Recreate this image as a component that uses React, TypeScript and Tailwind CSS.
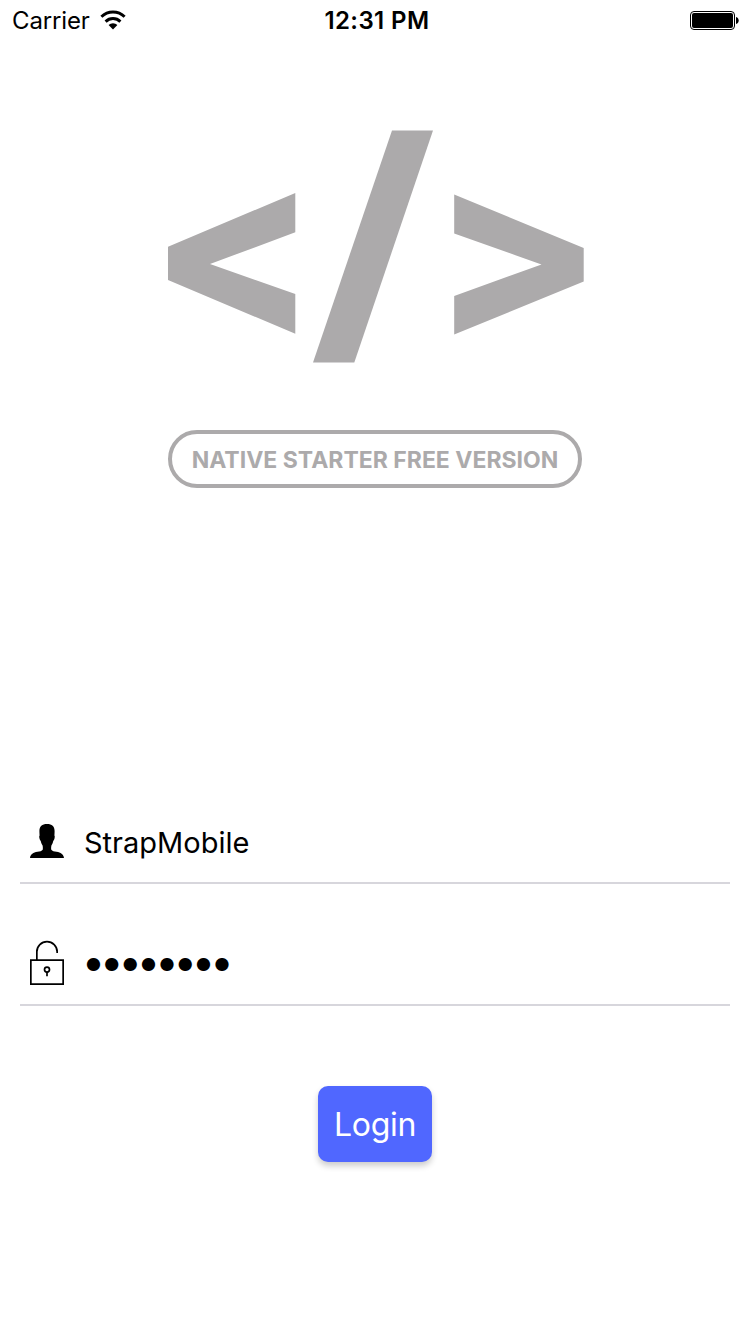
import type { ReactNode } from 'react';

function StatusBar() {
  return (
    <header className="grid h-10 grid-cols-3 items-center pl-3 pr-[11px] text-black">
      <div className="flex items-center gap-[10px]">
        <span className="pt-[2px] text-[24px] leading-[38px] tracking-[-0.15px]">Carrier</span>
        <svg width="26" height="20" viewBox="0 0 26 20" fill="none" stroke="#000" strokeWidth="2.9">
          <path d="M1.400 6.800a16.400 16.400 0 0 1 23.200 0" />
          <path d="M5.600 11.600a10.500 10.500 0 0 1 14.800 0" />
          <path d="M13 19.400l-4.400-4.400a6.200 6.200 0 0 1 8.800 0z" fill="#000" stroke="none" />
        </svg>
      </div>
      <span className="pl-[3px] pt-[2px] text-center text-[24px] font-semibold leading-[38px] tracking-[0.4px]">12:31 PM</span>
      <div className="flex items-center justify-end pt-px">
        <svg width="49" height="20" viewBox="0 0 49 20">
          <rect x="0.5" y="0.5" width="44" height="18" rx="3.5" fill="none" stroke="#000" />
          <rect x="2" y="2" width="41" height="15" rx="2" />
          <path d="M46 5.900c3.600.8 3.600 6.400 0 7.200z" />
        </svg>
      </div>
    </header>
  );
}

function Logo() {
  return (
    <div className="flex flex-col items-center pt-[90px]">
      <svg width="418" height="233" viewBox="166 130 418 233" fill="#acaaab">
        <path d="M168 246.7 295.3 193v39.3L210 264l85.3 30v39.8L168 280z" />
        <path d="M392 130.5h41L354.300 362.500H313z" />
        <path d="M454.200 194.500 583.700 248v33.500L454.200 334.500V296L541.500 264.500 454.200 233.500z" />
      </svg>
      <div className="mt-[67px] flex h-[58px] w-[414px] items-center justify-center rounded-full border-4 border-[#acaaab] pt-[2px]">
        <span className="whitespace-nowrap text-[23px] font-bold leading-none text-[#acaaab]">
          NATIVE STARTER FREE VERSION
        </span>
      </div>
    </div>
  );
}

function PersonIcon() {
  return (
    <svg className="mb-[2px]" width="34" height="34" viewBox="0 0 34 34">
      <path d="M17 0c5 0 7.600 2.400 7.600 7 0 1.600-.1 3.200-.2 4.600.5.400.4 1.600.1 2.900-.3 1.300-.7 2-1.200 2.300-.4 2-1.100 3.500-1.900 4.700-.3 1.800-.4 3.100-.1 4.200.9 1.300 2.900 1.700 5.200 2.100 4.300.8 6.900 2.300 7.500 6.200H0c.6-3.900 3.200-5.400 7.500-6.200 2.300-.4 4.300-.8 5.200-2.100.3-1.100.2-2.400-.1-4.200-.8-1.200-1.500-2.700-1.900-4.700-.5-.3-.9-1-1.200-2.300-.3-1.300-.4-2.500.1-2.900-.1-1.400-.2-3-.2-4.600C9.400 2.400 12 0 17 0z" />
    </svg>
  );
}

function UnlockIcon() {
  return (
    <svg className="mb-[2px]" width="34" height="46" viewBox="0 0 34 46" fill="none" stroke="#000" strokeWidth="1.700">
      <path d="M.85 20.150h32.300v24H.85z" />
      <path d="M6.850 20v-8.200a10.150 10.150 0 0 1 20.300 0v1.200" />
      <circle cx="17" cy="29.600" r="2.500" />
      <path d="M17 32v4.300" />
    </svg>
  );
}

function Field({ icon, children, className }: { icon: ReactNode; children: ReactNode; className: string }) {
  return (
    <div className={`flex items-center border-b-2 border-[#d7d6dc] pl-[10px] ${className}`}>
      {icon}
      {children}
    </div>
  );
}

export default function App() {
  return (
    <main className="flex h-[1334px] w-[750px] flex-col bg-white font-['Inter',sans-serif] text-black">
      <StatusBar />
      <Logo />
      <form className="mt-[314px] flex flex-col px-5" onSubmit={(event) => event.preventDefault()}>
        <Field icon={<PersonIcon />} className="h-[82px]">
          <span className="ml-5 pt-[2px] text-[29px] leading-[40px]">StrapMobile</span>
        </Field>
        <Field icon={<UnlockIcon />} className="mt-10 h-[82px]">
          <span className="ml-[21.500px] pt-px text-[17.500px] leading-[40px] tracking-[2.350px]">●●●●●●●●</span>
        </Field>
        <button
          type="submit"
          className="mt-20 flex h-[76px] w-[114px] items-center justify-center self-center rounded-[10px] bg-[#5067ff] pt-[2px] text-[32px] tracking-[-0.3px] text-white shadow-[0_4px_6px_rgba(0,0,0,0.2)]"
        >
          Login
        </button>
      </form>
    </main>
  );
}
